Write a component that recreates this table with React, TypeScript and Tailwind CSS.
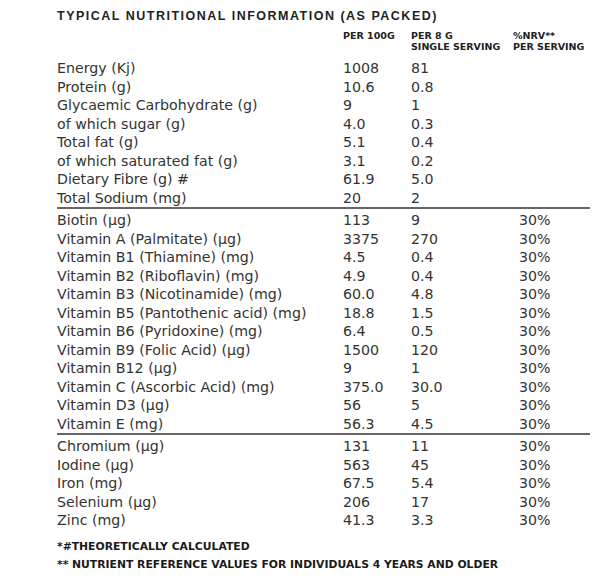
const sections: [string, string, string, string][][] = [
    [
        ['Energy (Kj)', '1008', '81', ''],
        ['Protein (g)', '10.6', '0.8', ''],
        ['Glycaemic Carbohydrate (g)', '9', '1', ''],
        ['of which sugar (g)', '4.0', '0.3', ''],
        ['Total fat (g)', '5.1', '0.4', ''],
        ['of which saturated fat (g)', '3.1', '0.2', ''],
        ['Dietary Fibre (g) #', '61.9', '5.0', ''],
        ['Total Sodium (mg)', '20', '2', ''],
    ],
    [
        ['Biotin (µg)', '113', '9', '30%'],
        ['Vitamin A (Palmitate) (µg)', '3375', '270', '30%'],
        ['Vitamin B1 (Thiamine) (mg)', '4.5', '0.4', '30%'],
        ['Vitamin B2 (Riboflavin) (mg)', '4.9', '0.4', '30%'],
        ['Vitamin B3 (Nicotinamide) (mg)', '60.0', '4.8', '30%'],
        ['Vitamin B5 (Pantothenic acid) (mg)', '18.8', '1.5', '30%'],
        ['Vitamin B6 (Pyridoxine) (mg)', '6.4', '0.5', '30%'],
        ['Vitamin B9 (Folic Acid) (µg)', '1500', '120', '30%'],
        ['Vitamin B12 (µg)', '9', '1', '30%'],
        ['Vitamin C (Ascorbic Acid) (mg)', '375.0', '30.0', '30%'],
        ['Vitamin D3 (µg)', '56', '5', '30%'],
        ['Vitamin E (mg)', '56.3', '4.5', '30%'],
    ],
    [
        ['Chromium (µg)', '131', '11', '30%'],
        ['Iodine (µg)', '563', '45', '30%'],
        ['Iron (mg)', '67.5', '5.4', '30%'],
        ['Selenium (µg)', '206', '17', '30%'],
        ['Zinc (mg)', '41.3', '3.3', '30%'],
    ],
];

const cols = 'grid grid-cols-[286px_68px_102px_1fr]';

export default function App() {
    return (
        <div className="w-[600px] h-[583px] bg-white pl-[57px] pt-[8px] text-[#333] font-['DejaVu_Sans',sans-serif]">
            <h1 className="text-[12.5px] leading-[17px] font-bold tracking-[0.12em] text-[#222] font-['Liberation_Sans',sans-serif]">
                TYPICAL NUTRITIONAL INFORMATION (AS PACKED)
            </h1>

            <div className="w-[533px]">
                <div className={`${cols} mt-[5px] text-[9.5px] leading-[11px] font-bold text-[#222]`}>
                    <div />
                    <div>PER 100G</div>
                    <div>PER 8 G<br />SINGLE SERVING</div>
                    <div>%NRV**<br />PER SERVING</div>
                </div>

                <div className="mt-[7px] text-[14.2px] leading-[18.5px]">
                    {sections.map((rows, i) => (
                        <div key={i} className={i > 0 ? 'border-t-2 border-[#666] pt-[2px]' : ''}>
                            {rows.map(([label, per100, perServing, nrv]) => (
                                <div key={label} className={cols}>
                                    <div className="whitespace-nowrap">{label}</div>
                                    <div>{per100}</div>
                                    <div>{perServing}</div>
                                    <div className="pl-[6px]">{nrv}</div>
                                </div>
                            ))}
                        </div>
                    ))}
                </div>

                <div className="mt-[8px] text-[10.8px] leading-[18px] font-bold text-[#1a1a1a]">
                    <p>*#THEORETICALLY CALCULATED</p>
                    <p>** NUTRIENT REFERENCE VALUES FOR INDIVIDUALS 4 YEARS AND OLDER</p>
                </div>
            </div>
        </div>
    );
}
